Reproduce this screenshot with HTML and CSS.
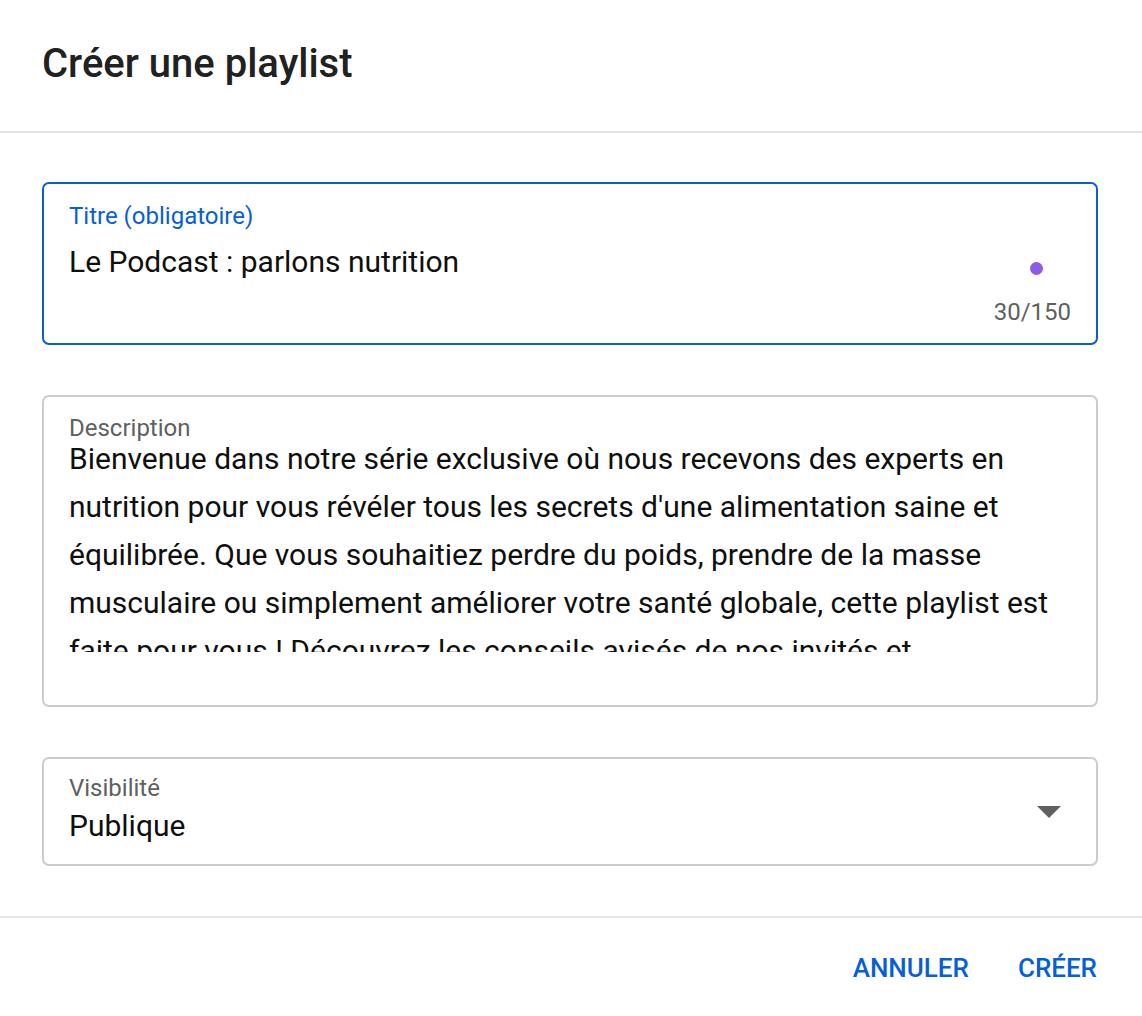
FILE: index.html
```html
<!DOCTYPE html>
<html lang="fr">
<head>
<meta charset="utf-8">
<title>Créer une playlist</title>
<link rel="stylesheet" href="styles.css">
</head>
<body>
<div class="dialog">
  <header class="dialog-header">
    <h1 class="dialog-title">Créer une playlist</h1>
  </header>
  <main class="dialog-body">
    <div class="field field-focused field-title">
      <label class="field-label">Titre (obligatoire)</label>
      <div class="field-row">
        <div class="field-value">Le Podcast : parlons nutrition</div>
        <span class="dot"></span>
      </div>
      <div class="counter">30/150</div>
    </div>
    <div class="field field-desc">
      <label class="field-label">Description</label>
      <div class="desc-text">Bienvenue dans notre série exclusive où nous recevons des experts en nutrition pour vous révéler tous les secrets d'une alimentation saine et équilibrée. Que vous souhaitiez perdre du poids, prendre de la masse musculaire ou simplement améliorer votre santé globale, cette playlist est faite pour vous ! Découvrez les conseils avisés de nos invités et</div>
    </div>
    <div class="field field-select">
      <div class="select-main">
        <label class="field-label">Visibilité</label>
        <div class="field-value">Publique</div>
      </div>
      <svg class="arrow" width="24" height="12" viewBox="0 0 24 12"><path d="M0 0 L24 0 L12 12 Z" fill="#606060"/></svg>
    </div>
  </main>
  <footer class="dialog-footer">
    <button class="btn">ANNULER</button>
    <button class="btn">CRÉER</button>
  </footer>
</div>
</body>
</html>
```

FILE: styles.css
```css
* { box-sizing: border-box; }
html, body { margin: 0; padding: 0; background: #fff; }
body { font-family: Roboto, "Liberation Sans", sans-serif; color: #0f0f0f; }
.dialog { width: 1142px; height: 1016px; display: flex; flex-direction: column; }
.dialog-header { height: 133px; border-bottom: 2px solid #e5e5e5; padding: 0 42px; }
.dialog-title { margin: 0; padding-top: 40px; font-size: 40px; font-weight: 500; color: #212121; line-height: 48px; }
.dialog-body { padding: 49px 44px 0 42px; height: 785px; display: flex; flex-direction: column; gap: 50px; border-bottom: 2px solid #e5e5e5; }
.field { border: 2px solid #cccccc; border-radius: 7px; padding: 0 25px; flex: none; }
.field-focused { border-color: #065fd4; }
.field-label { display: block; font-size: 24px; line-height: 28px; color: #606060; }
.field-focused .field-label { color: #065fd4; }
.field-title { height: 163px; padding-top: 18px; }
.field-row { display: flex; align-items: center; justify-content: space-between; margin-top: 12px; }
.field-value { font-size: 30px; line-height: 40px; color: #0f0f0f; }
.dot { width: 13px; height: 13px; border-radius: 50%; background: #8e5ae8; margin: 12px 28px 0 0; }
.counter { text-align: right; font-size: 24px; line-height: 28px; color: #606060; margin-top: 16px; }
.field-desc { height: 312px; padding-top: 17px; }
.desc-text { font-size: 30px; line-height: 48px; height: 217px; overflow: hidden; margin-top: -7px; padding-right: 0; }
.field-select { height: 109px; display: flex; align-items: flex-start; justify-content: space-between; padding-top: 15px; }
.field-select .field-value { margin-top: 4px; }
.arrow { margin: 32px 10px 0 0; }
.dialog-footer { flex: 1; display: flex; justify-content: flex-end; align-items: flex-start; padding: 32px 45px 0 0; gap: 49px; }
.btn { background: none; border: none; font-family: inherit; font-size: 26px; font-weight: 500; color: #065fd4; padding: 0; line-height: 36px; cursor: pointer; }
```
